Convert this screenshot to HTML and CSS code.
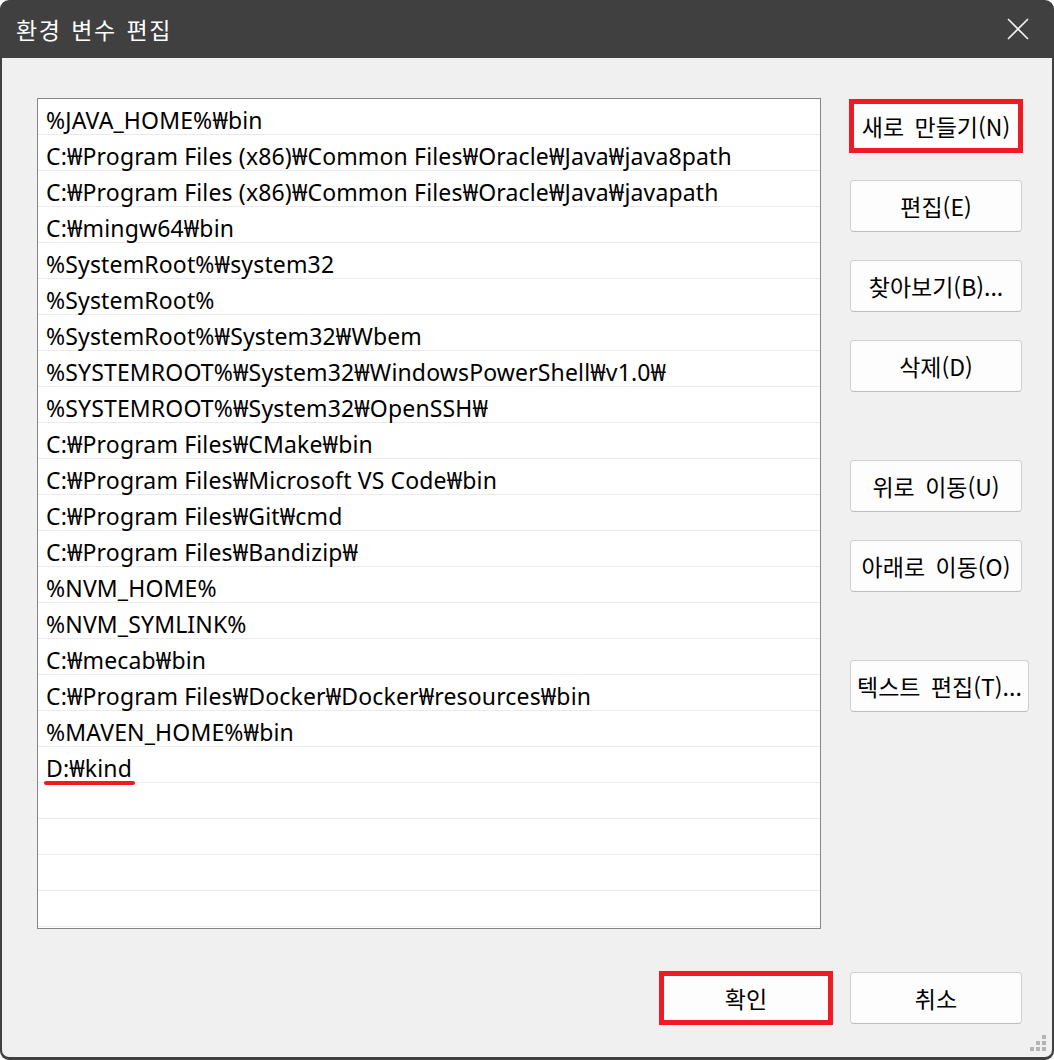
FILE: index.html
```html
<!DOCTYPE html>
<html lang="ko">
<head>
    <meta charset="UTF-8">
    <meta name="viewport" content="width=device-width, initial-scale=1.0">
    <title>환경 변수 편집</title>
    <link rel="stylesheet" href="styles.css">
</head>
<body>
    <div class="window">
        <div class="titlebar">
            <span class="title">환경 변수 편집</span>
            <svg class="close" width="22" height="22" viewBox="0 0 22 22">
                <path d="M1 1 L21 21 M21 1 L1 21" stroke="#f2f2f2" stroke-width="1.6" fill="none"/>
            </svg>
        </div>
        <div class="content">
            <div class="main">
                <ul class="path-list">
                    <li>%JAVA_HOME%₩bin</li>
                    <li>C:₩Program Files (x86)₩Common Files₩Oracle₩Java₩java8path</li>
                    <li>C:₩Program Files (x86)₩Common Files₩Oracle₩Java₩javapath</li>
                    <li>C:₩mingw64₩bin</li>
                    <li>%SystemRoot%₩system32</li>
                    <li>%SystemRoot%</li>
                    <li>%SystemRoot%₩System32₩Wbem</li>
                    <li>%SYSTEMROOT%₩System32₩WindowsPowerShell₩v1.0₩</li>
                    <li>%SYSTEMROOT%₩System32₩OpenSSH₩</li>
                    <li>C:₩Program Files₩CMake₩bin</li>
                    <li>C:₩Program Files₩Microsoft VS Code₩bin</li>
                    <li>C:₩Program Files₩Git₩cmd</li>
                    <li>C:₩Program Files₩Bandizip₩</li>
                    <li>%NVM_HOME%</li>
                    <li>%NVM_SYMLINK%</li>
                    <li>C:₩mecab₩bin</li>
                    <li>C:₩Program Files₩Docker₩Docker₩resources₩bin</li>
                    <li>%MAVEN_HOME%₩bin</li>
                    <li><span class="marked-text">D:₩kind</span></li>
                    <li></li>
                    <li></li>
                    <li></li>
                    <li></li>
                </ul>
                <div class="side">
                    <button class="marked">새로 만들기(N)</button>
                    <button>편집(E)</button>
                    <button>찾아보기(B)...</button>
                    <button>삭제(D)</button>
                    <button class="group-start">위로 이동(U)</button>
                    <button>아래로 이동(O)</button>
                    <button class="group-start">텍스트 편집(T)...</button>
                </div>
            </div>
            <div class="footer">
                <button class="marked">확인</button>
                <button>취소</button>
            </div>
            <svg class="grip" width="16" height="16" viewBox="0 0 16 16">
                <rect x="12" y="0" width="4" height="4" fill="#b4b4b4"/>
                <rect x="6" y="6" width="4" height="4" fill="#b4b4b4"/>
                <rect x="12" y="6" width="4" height="4" fill="#b4b4b4"/>
                <rect x="0" y="12" width="4" height="4" fill="#b4b4b4"/>
                <rect x="6" y="12" width="4" height="4" fill="#b4b4b4"/>
                <rect x="12" y="12" width="4" height="4" fill="#b4b4b4"/>
            </svg>
        </div>
    </div>
</body>
</html>
```

FILE: styles.css
```css
html, body {
    margin: 0;
    background-color: #ffffff;
}
.window {
    display: flex;
    flex-direction: column;
    width: 1054px;
    height: 1060px;
    box-sizing: border-box;
    padding: 0 2px 3px 2px;
    background-color: #404040;
    border-radius: 9px;
    overflow: hidden;
    font-family: "Noto Sans CJK KR", sans-serif;
}
.titlebar {
    display: flex;
    align-items: center;
    justify-content: space-between;
    height: 58px;
    padding: 0 23px 0 14px;
    flex-shrink: 0;
}
.title {
    color: #ffffff;
    font-size: 23px;
    letter-spacing: 1.5px;
    word-spacing: 2px;
}
.content {
    position: relative;
    flex: 1;
    display: flex;
    flex-direction: column;
    padding: 40px 0 33px 35px;
    background-color: #f0f0f0;
    border-radius: 0 0 7px 7px;
}
.main {
    display: flex;
    gap: 29px;
    height: 831px;
}
.path-list {
    list-style: none;
    margin: 0;
    padding: 0;
    width: 784px;
    box-sizing: border-box;
    border: 1px solid #868686;
    background-color: #ffffff;
    overflow: hidden;
    font-family: "Noto Sans", "Noto Sans CJK KR", sans-serif;
    font-size: 23px;
    letter-spacing: 0.15px;
    color: #000000;
}
.path-list li {
    height: 35px;
    line-height: 42px;
    padding-left: 8px;
    border-bottom: 1px solid #ebebeb;
    white-space: nowrap;
}
.marked-text {
    position: relative;
}
.marked-text::after {
    content: "";
    position: absolute;
    left: -2px;
    right: -3px;
    bottom: -1px;
    height: 4px;
    border-radius: 2px;
    background-color: #ed1c24;
}
.side {
    display: flex;
    flex-direction: column;
    align-items: flex-start;
    gap: 28px;
    width: 172px;
    padding-top: 2px;
}
.side .group-start {
    margin-top: 40px;
}
button {
    min-width: 172px;
    height: 52px;
    padding: 0 6px;
    box-sizing: border-box;
    border: 1px solid #d0d0d0;
    border-bottom-color: #bcbcbc;
    border-radius: 4px;
    background-color: #fdfdfd;
    font-family: "Noto Sans CJK KR", sans-serif;
    font-size: 23px;
    word-spacing: 4px;
    color: #000000;
    white-space: nowrap;
}
button.marked {
    border-radius: 0;
    outline: 5px solid #ed1c24;
    outline-offset: -4px;
}
.footer {
    display: flex;
    justify-content: flex-end;
    gap: 18px;
    margin-top: 43px;
    padding-right: 30px;
}
.grip {
    position: absolute;
    right: 6px;
    bottom: 6px;
}
```
